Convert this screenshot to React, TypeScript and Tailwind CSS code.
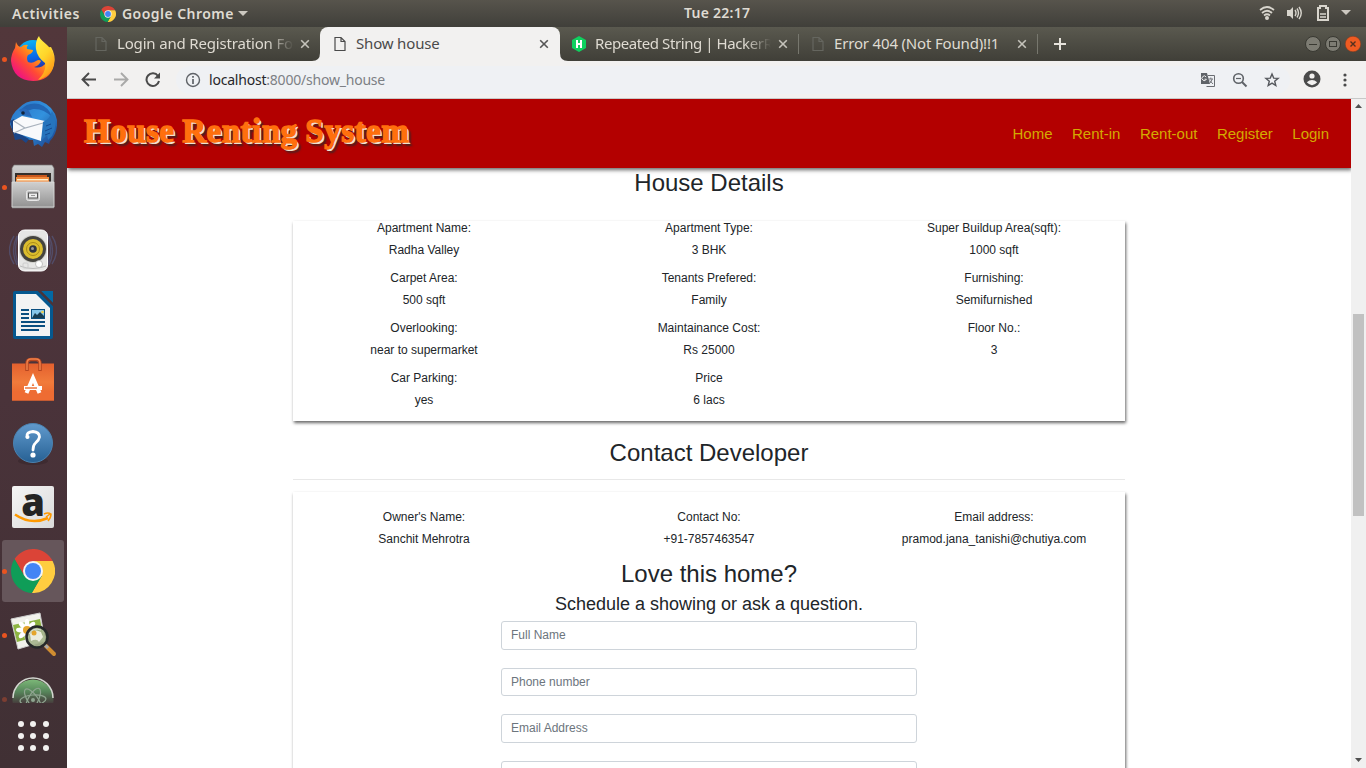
import React from "react";

const ui = "font-['Noto_Sans','Open_Sans',sans-serif]";
const web = "font-['Liberation_Sans',Arial,sans-serif]";

function ChromeLogo({ size }: { size: number }) {
  return (
    <svg width={size} height={size} viewBox="-22 -22 44 44" className="shrink-0">
      <path d="M-18.45-11.98A22 22 0 0 1 19.6-10L0-10L-8.66 5Z" fill="#db4437" />
      <path d="M19.6-10A22 22 0 0 1-1.15 21.97L8.66 5L0-10Z" fill="#ffcd40" />
      <path d="M-1.15 21.97A22 22 0 0 1-18.45-11.98L-8.66 5L8.66 5Z" fill="#0f9d58" />
      <circle r="10" fill="#f5f5f5" />
      <circle r="8" fill="#4285f4" />
    </svg>
  );
}

function Firefox() {
  return (
    <svg width="48" height="48" viewBox="0 0 48 48">
      <defs>
        <linearGradient id="ffo" x1="0.9" y1="0.1" x2="0.15" y2="0.8">
          <stop offset="0" stopColor="#ffe040" />
          <stop offset="0.4" stopColor="#ff9a15" />
          <stop offset="0.7" stopColor="#ff4a35" />
          <stop offset="1" stopColor="#f0187a" />
        </linearGradient>
        <linearGradient id="ffb" x1="0.4" y1="0" x2="0.6" y2="1">
          <stop offset="0" stopColor="#08b4f4" />
          <stop offset="0.5" stopColor="#0868e8" />
          <stop offset="1" stopColor="#30208a" />
        </linearGradient>
        <linearGradient id="ffy" x1="0" y1="0" x2="0.5" y2="1">
          <stop offset="0" stopColor="#fff04a" />
          <stop offset="0.55" stopColor="#ffd52a" />
          <stop offset="1" stopColor="#ff9a18" />
        </linearGradient>
      </defs>
      <circle cx="24" cy="22" r="17" fill="url(#ffb)" />
      <path d="M7 7C8 10 10 12 12 12Q15 9 19 10Q17 12 18 14L24 15Q24 18 19 20Q17 23 19 27Q23 29 27 26Q30 24 32 26Q30 31 25 32Q32 34 37 28Q42 20 36 13L42 12Q47 20 45 30Q41 46 24 46Q4 45 2 26Q2 19 6 13Z" fill="url(#ffo)" />
      <path d="M30 1C31 6 40 9 44 18C49 32 39 43 29 45Q38 36 36 28Q28 22 27 14Q26 6 30 1Z" fill="url(#ffy)" />
    </svg>
  );
}

function Thunderbird() {
  return (
    <svg width="48" height="48" viewBox="0 0 48 48">
      <defs>
        <linearGradient id="tb" x1="0" y1="0" x2="1" y2="1">
          <stop offset="0" stopColor="#2a72c4" />
          <stop offset="0.5" stopColor="#3292de" />
          <stop offset="1" stopColor="#173a86" />
        </linearGradient>
      </defs>
      <path d="M1 25Q2 15 10 9Q18 0 31 2Q45 7 48 21Q49 34 41 42L40 45L36 43L33 48L29 45L25 47L24 41Q6 41 1 25Z" fill="url(#tb)" />
      <path d="M12 11Q18 3 30 5Q40 8 43 18Q34 9 24 10L12 14Z" fill="#1c57a5" opacity=".7" />
      <path d="M1 22L6 41L12 40L17 44L20 40L8 33L5 20Z" fill="#1b4688" />
      <path d="M4 22L13 17L36 22L32 42L4 33Z" fill="#f8f9fb" />
      <path d="M5 22L16 29L34 24M16 29L5 34" fill="none" stroke="#a9b2bd" strokeWidth="1.2" />
      <path d="M10 11Q15 7 20 12L23 18L14 16Z" fill="#2868b8" />
      <circle cx="14" cy="14" r="1.8" fill="#10243b" />
      <path d="M34 23Q41 20 43 12Q50 24 43 37L39 41L38 36L32 42Z" fill="#2674bd" />
      <path d="M37 27L42 25M36 32L43 29M36 36L41 34" stroke="#154a91" />
    </svg>
  );
}

function Files() {
  return (
    <svg width="48" height="48" viewBox="0 0 48 48">
      <defs>
        <linearGradient id="fg" x2="0" y2="1"><stop stopColor="#d0d0d0" /><stop offset="1" stopColor="#929292" /></linearGradient>
      </defs>
      <path d="M5 2H43L45 5V45H3V5Z" fill="url(#fg)" stroke="#777" strokeWidth=".7" />
      <path d="M6 10H42V19H6Z" fill="#342f2c" />
      <path d="M8 12H38V20H8Z" fill="#c9581d" />
      <path d="M7 14H40V20H7Z" fill="#f0893c" />
      <path d="M8 16H39V17.500H8Z" fill="#fff0ce" />
      <path d="M3 19H45V44H3Z" fill="url(#fg)" stroke="#ddd" strokeWidth=".8" />
      <rect x="17.500" y="27.500" width="13" height="10" rx="2" fill="#c4c4c4" stroke="#e8e8e8" />
      <rect x="19.5" y="30" width="9" height="5" fill="#eee" stroke="#555" />
      <path d="M22 32.500H26" stroke="#999" strokeWidth="1" />
    </svg>
  );
}

function Rhythmbox() {
  return (
    <svg width="48" height="48" viewBox="0 0 48 48">
      <g fill="none" stroke="#5a71ad" strokeWidth="1.4" opacity=".4">
        <path d="M8 9Q1 23 8 38M5 9Q-4 23 5 37M11 5Q2 23 11 41M40 9Q47 23 40 38M43 9Q52 23 43 37M37 5Q46 23 37 41" />
      </g>
      <rect x="9.5" y="3" width="29" height="41" rx="6" fill="#e6e6e5" stroke="#fff" />
      <path d="M11 39Q24 44 37 39" stroke="#bbb" fill="none" />
      <circle cx="24" cy="22" r="14" fill="#cfcfcb" />
      <circle cx="24" cy="22" r="13" fill="#45443f" />
      <circle cx="24" cy="22" r="10" fill="#dbbd2e" />
      <circle cx="24" cy="22" r="6.5" fill="none" stroke="#aa8b18" />
      <circle cx="24" cy="22" r="3.800" fill="#303540" />
      <circle cx="23.500" cy="21.500" r="1.5" fill="#999" />
      <circle cx="30" cy="37" r="3.5" fill="#fff" stroke="#aaa" strokeWidth=".7" />
      <rect x="14" y="36" width="5" height="5" rx="1" fill="none" stroke="#ccc" />
    </svg>
  );
}

function Writer() {
  return (
    <svg width="48" height="48" viewBox="0 0 48 48">
      <path d="M6 0H29L44 15V46Q44 48 42 48H6Q4 48 4 46V2Q4 0 6 0Z" fill="#05588f" />
      <path d="M7 3H27L41 17V45H7Z" fill="#f2f3f3" />
      <path d="M32 0H44V12Z" fill="#0369a3" />
      <path d="M29 0H32L44 12V15Z" fill="#4b3338" />
      <path d="M12 19H20M12 23H20M12 27H20M12 31H36M12 35H36M12 39H30" stroke="#0a4f80" strokeWidth="2" />
      <rect x="22.500" y="18.500" width="13" height="9" fill="#86c6e9" stroke="#0a4f80" />
      <path d="M23 27L26 22L28 24L31 21L35 25V27Z" fill="#183d51" />
      <circle cx="33.500" cy="21" r="1.3" fill="#f4cf45" />
    </svg>
  );
}

function Software() {
  return (
    <svg width="48" height="48" viewBox="0 0 48 48">
      <defs><linearGradient id="sw" x2="0" y2="1"><stop stopColor="#e4602e" /><stop offset=".5" stopColor="#f17b3b" /><stop offset="1" stopColor="#e9602a" /></linearGradient></defs>
      <path d="M3 8.500H45V45.500H3Z" fill="url(#sw)" />
      <path d="M3 36H45V45.500H3Z" fill="#ee6c33" />
      <path d="M18 16V9Q18 4.500 22 4.500H27Q31 4.500 31 9V16" fill="none" stroke="#b54520" strokeWidth="3.500" />
      <path d="M18 15V8.500Q18 4 22 4H27Q31 4 31 8.500V15" fill="none" stroke="#f0814a" strokeWidth="1.5" />
      <path d="M17.500 38L24 23L30.500 38" fill="none" stroke="#fff" strokeWidth="4" />
      <path d="M15 33H33" stroke="#fff" strokeWidth="4" />
      <path d="M16 33H28" stroke="#ed743c" strokeWidth="1.5" />
    </svg>
  );
}

function Help() {
  return (
    <svg width="48" height="48" viewBox="0 0 48 48">
      <defs><linearGradient id="hl" x2="0" y2="1"><stop stopColor="#619acd" /><stop offset="1" stopColor="#276194" /></linearGradient></defs>
      <ellipse cx="24" cy="42" rx="15" ry="4" fill="#302126" opacity=".4" />
      <circle cx="24" cy="24" r="19.5" fill="url(#hl)" stroke="#4a82b0" />
      <path d="M18 18Q17 13 24 12.500Q30.500 13 30.500 18Q30 21 26.500 24Q24 26 24 31" fill="none" stroke="white" strokeWidth="2.800" strokeLinecap="round" />
      <circle cx="18.500" cy="18" r="2" fill="#fff" />
      <circle cx="24" cy="36" r="2.600" fill="#fff" />
    </svg>
  );
}

function Amazon() {
  return (
    <div className="relative flex h-[42px] w-[42px] items-start justify-center rounded-[2px] bg-linear-to-br from-[#f5f5f5] to-[#dadada]">
      <span className="font-['Open_Sans',sans-serif] text-[38px] leading-[31px] font-extrabold text-[#242424]">a</span>
      <svg className="absolute top-0 left-0" width="42" height="42" viewBox="0 0 42 42">
        <path d="M3 28.500Q19 39.500 36 32" fill="none" stroke="#ff9900" strokeWidth="2.500" />
        <path d="M32 28Q36 26 39 28Q39 32 36 35M38 28L34 31" fill="none" stroke="#ff9900" strokeWidth="1.500" />
      </svg>
    </div>
  );
}

function ImageViewer() {
  return (
    <svg width="48" height="48" viewBox="0 0 48 48">
      <path d="M2 8L31 2L36 30L9 38Z" fill="#f2f2ec" stroke="#ccc" />
      <path d="M4 14L31 8L34 24L8 31Z" fill="#8db442" />
      {[0, 45, 90, 135, 180, 225, 270, 315].map((a) => (
        <ellipse key={a} cx="18" cy="13" rx="2.400" ry="5" fill="#fff" transform={`rotate(${a} 18 19)`} />
      ))}
      <circle cx="18" cy="19" r="4" fill="#e4a52c" />
      <path d="M37 35L45 43" stroke="#d08d31" strokeWidth="4" strokeLinecap="round" />
      <path d="M34 32L39 37" stroke="#aaa" strokeWidth="3" />
      <circle cx="28" cy="26" r="10.500" fill="#a3b38b" fillOpacity=".9" stroke="#252829" strokeWidth="2.600" />
      <path d="M21 23Q25 17 32 21L34 26L30 31Q28 27 22 30Z" fill="#f1f2e7" opacity=".9" />
      <circle cx="25" cy="22" r="2.500" fill="#e4a52c" />
      <path d="M20 23Q24 16 32 19" stroke="#d8ded5" fill="none" />
    </svg>
  );
}

function Atom() {
  return (
    <svg width="48" height="48" viewBox="0 0 48 48">
      <defs><linearGradient id="at" x2="0" y2="1"><stop stopColor="#7cb878" /><stop offset=".3" stopColor="#56855a" /><stop offset=".62" stopColor="#443238" /></linearGradient></defs>
      <circle cx="24" cy="24" r="20.500" fill="url(#at)" />
      <path d="M4 22A20 20 0 0 1 44 22" fill="none" stroke="#d4d8d1" strokeWidth="1.500" />
      <g fill="none" stroke="#8fa590" strokeWidth="1.200"><ellipse cx="24" cy="24" rx="5" ry="13" transform="rotate(85 24 24)" /><ellipse cx="24" cy="24" rx="5" ry="13" transform="rotate(28 24 24)" /><ellipse cx="24" cy="24" rx="5" ry="13" transform="rotate(-35 24 24)" /></g>
      <circle cx="24" cy="24" r="2" fill="#8fa590" />
    </svg>
  );
}

function PageIcon({ color }: { color: string }) {
  return (
    <svg width="12" height="16" viewBox="0 0 12 16" className="shrink-0" fill="none" stroke={color} strokeWidth="1.200">
      <path d="M1 1.500H7L11 5.500V14.500H1ZM7 1.500V5.500H11" />
    </svg>
  );
}

function Close({ color }: { color: string }) {
  return <svg width="10" height="10" viewBox="0 0 10 10" className="shrink-0"><path d="M1.200 1.200L8.800 8.800M8.800 1.200L1.200 8.800" stroke={color} strokeWidth="1.600" /></svg>;
}

const launcher = [
  { icon: <Firefox />, dot: true },
  { icon: <Thunderbird /> },
  { icon: <Files />, dot: true },
  { icon: <Rhythmbox /> },
  { icon: <Writer /> },
  { icon: <Software /> },
  { icon: <Help /> },
  { icon: <Amazon /> },
  { icon: <ChromeLogo size={44} />, dot: true, active: true },
  { icon: <ImageViewer />, dot: true },
];

function Launcher() {
  return (
    <aside className="flex w-[67px] shrink-0 flex-col bg-linear-to-b from-[#52373b] via-[#4a333a] to-[#403034]">
      {launcher.map((it, i) => (
        <div key={i} className="relative flex h-16 shrink-0 items-center justify-center pr-[1px]">
          {it.active && <div className="absolute top-[1px] left-[2px] h-[62px] w-[62px] rounded-[3px] bg-[#66565b]" />}
          {it.dot && <div className="absolute top-[29.500px] left-[2px] h-[5px] w-[5px] rounded-full bg-[#e95420]" />}
          <div className="relative">{it.icon}</div>
        </div>
      ))}
      <div className="relative h-[36px] shrink-0 overflow-hidden pt-[9px] pl-[9px]">
        <div className="absolute top-[29.500px] left-[2px] h-[5px] w-[5px] rounded-full bg-[#7c3e32]" />
        <Atom />
      </div>
      <div className="mt-[18px] ml-[18px] grid w-[31px] grid-cols-3 gap-[6px]">
        {Array.from({ length: 9 }, (_, i) => <span key={i} className="h-[6px] w-[6px] rounded-full bg-[#f2f1f0]" />)}
      </div>
    </aside>
  );
}

function TopBar() {
  return (
    <header className={`flex h-[27px] shrink-0 items-center bg-linear-to-b from-[#57544c] to-[#403f3a] text-[#dfdbd2] ${ui}`}>
      <div className="flex w-[684px] items-center pl-3 text-[14px] leading-[27px] font-semibold">
        <span className="w-[88px] tracking-[.55px]">Activities</span>
        <ChromeLogo size={16} />
        <span className="ml-[6px] w-[116px] whitespace-nowrap tracking-[.45px]">Google Chrome</span>
        <svg width="10" height="6"><path d="M0 0H10L5 5Z" fill="#ccc8c0" /></svg>
      </div>
      <span className="pb-px text-[14px] leading-[26px] font-semibold tracking-[.25px]">Tue 22:17</span>
      <div className="ml-auto flex items-center pr-[15px] pb-px">
        <svg width="16" height="16" viewBox="0 0 16 16" fill="none" stroke="#d8d5cd" strokeWidth="1.700">
          <path d="M1 5Q8-1 15 5M3 8Q8 3.500 13 8M5 10.500Q8 8 11 10.500" /><circle cx="8" cy="13" r="2" fill="#d8d5cd" stroke="none" />
        </svg>
        <svg className="ml-[11px]" width="17" height="16" viewBox="0 0 17 16" fill="none" stroke="#d8d5cd" strokeWidth="1.400">
          <path d="M1 5H4L7 2V14L4 11H1Z" fill="#d8d5cd" stroke="none" /><path d="M9 5Q11 8 9 11M11 3.500Q14 8 11 12.500M13 2Q17.500 8 13 14" />
        </svg>
        <svg className="ml-[14px]" width="12" height="16" viewBox="0 0 12 16"><path d="M1 3H3V1H9V3H11V15H1Z" fill="none" stroke="#d8d5cd" strokeWidth="2" /><path d="M3 9H9M3 12H9" stroke="#d8d5cd" strokeWidth="1.500" /></svg>
        <svg className="ml-[12px]" width="10" height="6"><path d="M0 0H10L5 5Z" fill="#ccc8c0" /></svg>
      </div>
    </header>
  );
}

const tabText = "whitespace-nowrap pb-[2px] text-[15px] leading-[30px]";

function Tabs() {
  return (
    <div className={`flex h-[34px] shrink-0 items-center bg-linear-to-b from-[#5a594f] to-[#403f38] text-[#dfdbd2] ${ui}`}>
      <div className="flex w-[245px] items-center pl-7">
        <PageIcon color="#65665f" />
        <span className={`${tabText} ml-[10px] w-[177px] tracking-[-.17px] [mask-image:linear-gradient(to_right,black_85%,transparent)]`}>Login and Registration Fo</span>
        <span className="ml-[6px] flex"><Close color="#c5c3bb" /></span>
      </div>
      <div className="flex h-full w-2 items-end">
        <svg width="8" height="8"><path d="M8 0V8H0Q8 8 8 0Z" fill="#f2f1f0" /></svg>
      </div>
      <div className="flex h-full w-[240px] items-center rounded-t-[8px] bg-[#f2f1f0] pl-[14px] text-[#4a4a4a]">
        <PageIcon color="#4a4a4a" />
        <span className={`${tabText} ml-[10px] w-[183px] tracking-[-.17px]`}>Show house</span>
        <Close color="#555" />
      </div>
      <div className="flex h-full w-2 items-end">
        <svg width="8" height="8"><path d="M0 0V8H8Q0 8 0 0Z" fill="#f2f1f0" /></svg>
      </div>
      <div className="flex w-[230px] items-center pl-[3px]">
        <svg width="16" height="16" viewBox="0 0 16 16" className="shrink-0"><path d="M8 0L15 4V12L8 16L1 12V4Z" fill="#0fd05f" /><path d="M6 4V12M10 4V12M6 8H10" stroke="#fff" strokeWidth="2" /></svg>
        <span className={`${tabText} ml-2 w-[176px] tracking-[-.42px] [mask-image:linear-gradient(to_right,black_85%,transparent)]`}>Repeated String | HackerR</span>
        <span className="ml-[7px] flex"><Close color="#c5c3bb" /></span>
      </div>
      <div className="h-5 w-px bg-[#77776e]" />
      <div className="flex w-[238px] items-center pl-[13px]">
        <PageIcon color="#65665f" />
        <span className={`${tabText} ml-[10px] w-[183px] tracking-[-.17px]`}>Error 404 (Not Found)!!1</span>
        <Close color="#c5c3bb" />
      </div>
      <div className="h-5 w-px bg-[#77776e]" />
      <svg className="ml-4" width="12" height="12"><path d="M6 0V12M0 6H12" stroke="#e6e3dc" strokeWidth="2" /></svg>
      <div className="ml-auto flex gap-1 pr-[5px]">
        <svg width="16" height="16"><circle cx="8" cy="8" r="7.500" fill="#7d7c73" stroke="#393932" /><path d="M4 8.500H12" stroke="#393932" /></svg>
        <svg width="16" height="16"><circle cx="8" cy="8" r="7.500" fill="#7d7c73" stroke="#393932" /><rect x="4.500" y="5.500" width="7" height="5" fill="none" stroke="#393932" /></svg>
        <svg width="16" height="16"><circle cx="8" cy="8" r="7.800" fill="#ee5b22" stroke="#7b3820" strokeWidth=".5" /><path d="M5.500 5.500L10.500 10.500M10.500 5.500L5.500 10.500" stroke="#52301f" strokeWidth="1.400" /></svg>
      </div>
    </div>
  );
}

function Toolbar() {
  return (
    <div className={`flex h-[38px] shrink-0 items-center border-b border-[#c8c8c8] bg-[#f2f1f0] ${ui}`}>
      <svg className="ml-[14px]" width="16" height="16" viewBox="0 0 16 16" fill="none" stroke="#4a4a4a" strokeWidth="1.900"><path d="M15 7.500H2M8 1L1.500 7.500L8 14" /></svg>
      <svg className="ml-4" width="16" height="16" viewBox="0 0 16 16" fill="none" stroke="#a9a9a8" strokeWidth="1.900"><path d="M1 7.500H14M8 1L14.500 7.500L8 14" /></svg>
      <svg className="ml-4" width="16" height="16" viewBox="0 0 16 16"><path d="M13 4A6.300 6.300 0 1 0 14 9" fill="none" stroke="#4a4a4a" strokeWidth="2" /><path d="M15 .5V6.500H9Z" fill="#4a4a4a" /></svg>
      <div className="ml-[15px] flex h-7 w-[1114px] items-center rounded-full bg-[#eff1f4] pl-[9px]">
        <svg width="16" height="16" viewBox="0 0 16 16" fill="none" stroke="#5f6368" strokeWidth="1.400"><circle cx="8" cy="8" r="6.500" /><path d="M8 7V12M8 4V5.700" strokeWidth="1.700" /></svg>
        <span className="ml-2 text-[14px] leading-[28px] tracking-[-.21px] text-[#7d8085]"><span className="text-[#27272b]">localhost</span>:8000/show_house</span>
        <div className="mr-[10px] ml-auto flex items-center gap-4">
          <svg width="16" height="16" viewBox="0 0 16 16"><path d="M8 3.500H14.500V14.500H6.500" fill="none" stroke="#6a6d72" /><path d="M1 1H7L10 12H1Z" fill="#5f6368" /><path d="M6.200 5A2.300 2.300 0 1 0 6.400 7.200H4.500" fill="none" stroke="#eee" /><path d="M8.500 7H13M10.800 5.500V7M12.200 7Q11.500 10 9 12M9.800 8.500L13 12" fill="none" stroke="#74777c" /></svg>
          <svg width="16" height="16" viewBox="0 0 16 16" fill="none" stroke="#5f6368" strokeWidth="1.600"><circle cx="6.500" cy="6.500" r="4.800" /><path d="M10 10L14.500 14.500" strokeWidth="2" /><path d="M4 6.500H9" strokeWidth="1.200" /></svg>
          <svg width="16" height="16" viewBox="0 0 16 16" fill="none" stroke="#55585d" strokeWidth="1.400"><path d="M8 2L9.700 6.100L14.100 6.400L10.700 9.200L11.800 13.600L8 11.200L4.200 13.600L5.300 9.200L1.900 6.400L6.300 6.100Z" /></svg>
        </div>
      </div>
      <svg className="mb-px ml-[13px]" width="18" height="18" viewBox="0 0 18 18"><circle cx="9" cy="9" r="8.500" fill="#4a4a4a" /><circle cx="9" cy="6" r="2.600" fill="#f2f1f0" /><path d="M3.800 12.300Q9 7.500 14.200 12.300Q9 18 3.800 12.300Z" fill="#f2f1f0" /></svg>
      <svg className="ml-[20.500px]" width="6" height="14" viewBox="0 0 6 14" fill="#4a4a4a"><circle cx="3" cy="2" r="1.600" /><circle cx="3" cy="7" r="1.600" /><circle cx="3" cy="12" r="1.600" /></svg>
    </div>
  );
}

const details = [
  ["Apartment Name:", "Radha Valley"],
  ["Apartment Type:", "3 BHK"],
  ["Super Buildup Area(sqft):", "1000 sqft"],
  ["Carpet Area:", "500 sqft"],
  ["Tenants Prefered:", "Family"],
  ["Furnishing:", "Semifurnished"],
  ["Overlooking:", "near to supermarket"],
  ["Maintainance Cost:", "Rs 25000"],
  ["Floor No.:", "3"],
  ["Car Parking:", "yes"],
  ["Price", "6 lacs"],
];

const owner = [
  ["Owner's Name:", "Sanchit Mehrotra"],
  ["Contact No:", "+91-7857463547"],
  ["Email address:", "pramod.jana_tanishi@chutiya.com"],
];

function Pairs({ items }: { items: string[][] }) {
  return (
    <dl className="-mx-[11.5px] grid grid-cols-3 text-center text-[12px] leading-[14px]">
      {items.map(([k, v]) => (
        <div key={k} className="h-[50px]">
          <dt className="mb-2">{k}</dt>
          <dd>{v}</dd>
        </div>
      ))}
    </dl>
  );
}

const card = "bg-white shadow-[1px_2px_3px_rgba(0,0,0,0.6)]";

function Page() {
  return (
    <div className={`flex min-h-0 flex-1 bg-white text-[#212529] ${web}`}>
      <div className="flex min-w-0 flex-1 flex-col overflow-hidden">
        <nav className="flex h-[69px] shrink-0 items-center justify-between bg-[#b30000] pr-[22px] pl-[17px] shadow-[1px_2px_4px_rgba(0,0,0,0.6)]">
          <span className="pb-[4px] font-['Liberation_Serif',serif] text-[33px] font-bold tracking-[.5px] whitespace-nowrap text-[#ff6f0d] [-webkit-text-stroke:1.4px_#ff6f0d] [text-shadow:2px_2px_0_#eee3d0,4px_4px_2px_#4a2020] [word-spacing:-1px]">House Renting System</span>
          <div className="flex gap-[19.5px] pt-px text-[15px] text-[#d4aa00]">
            {["Home", "Rent-in", "Rent-out", "Register", "Login"].map((l) => <a key={l}>{l}</a>)}
          </div>
        </nav>
        <main className="ml-[226px] w-[832px]">
          <h2 className="h-[53px] text-center text-[24px] leading-[29px]">House Details</h2>
          <section className={`h-[200px] ${card}`}><Pairs items={details} /></section>
          <h2 className="mt-[17px] h-[42px] border-b border-[#e8e8e8] text-center text-[24px] leading-[29px]">Contact Developer</h2>
          <section className={`mt-[12px] h-[400px] pt-[18px] ${card}`}>
            <Pairs items={owner} />
            <h2 className="-mt-px text-center text-[24px] leading-[29px]">Love this home?</h2>
            <h3 className="mt-[5px] text-center text-[18px] leading-[22px]">Schedule a showing or ask a question.</h3>
            <form className="mx-auto mt-[6px] flex w-[416px] flex-col gap-[18px]">
              {["Full Name", "Phone number", "Email Address", "Message"].map((p) => (
                <input key={p} placeholder={p} className="h-[28.6px] shrink-0 rounded-[3px] border border-[#ced4da] px-[9px] text-[12px] placeholder:text-[#6c757d]" />
              ))}
            </form>
          </section>
        </main>
      </div>
      <div className="flex w-[15px] shrink-0 flex-col items-center justify-between bg-[#f0f0f0] py-[5px]">
        <svg width="7" height="5"><path d="M3.500 0L7 4H0Z" fill="#505050" /></svg>
        <div className="mt-[205px] mb-auto h-[202px] w-[11px] bg-[#c1c1c1]" />
        <svg width="7" height="5"><path d="M0 0H7L3.500 4Z" fill="#505050" /></svg>
      </div>
    </div>
  );
}

export default function App() {
  return (
    <div className="flex h-[768px] w-[1366px] flex-col overflow-hidden">
      <TopBar />
      <div className="flex min-h-0 flex-1">
        <Launcher />
        <div className="flex min-w-0 flex-1 flex-col">
          <Tabs />
          <Toolbar />
          <Page />
        </div>
      </div>
    </div>
  );
}
